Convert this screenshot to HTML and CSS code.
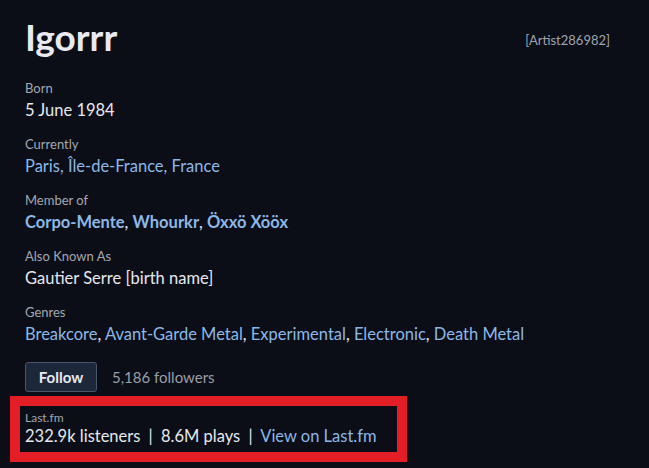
FILE: index.html
```html
<!DOCTYPE html>
<html lang="en">
<head>
<meta charset="utf-8">
<title>Igorrr</title>
<link rel="stylesheet" href="styles.css">
</head>
<body>
<main class="artist">
  <header class="artist-head">
    <h1 class="artist-name">Igorrr</h1>
    <span class="artist-id">[Artist286982]</span>
  </header>

  <dl class="facts">
    <div class="fact">
      <dt class="fact-label">Born</dt>
      <dd class="fact-value">5 June 1984</dd>
    </div>
    <div class="fact">
      <dt class="fact-label">Currently</dt>
      <dd class="fact-value"><a class="link" href="#">Paris, Île-de-France, France</a></dd>
    </div>
    <div class="fact">
      <dt class="fact-label">Member of</dt>
      <dd class="fact-value"><a class="link strong" href="#">Corpo-Mente</a>, <a class="link strong" href="#">Whourkr</a>, <a class="link strong" href="#">Öxxö Xööx</a></dd>
    </div>
    <div class="fact">
      <dt class="fact-label">Also Known As</dt>
      <dd class="fact-value">Gautier Serre [birth name]</dd>
    </div>
    <div class="fact">
      <dt class="fact-label">Genres</dt>
      <dd class="fact-value"><a class="link" href="#">Breakcore</a>, <a class="link" href="#">Avant-Garde Metal</a>, <a class="link" href="#">Experimental</a>, <a class="link" href="#">Electronic</a>, <a class="link" href="#">Death Metal</a></dd>
    </div>
  </dl>

  <div class="follow-row">
    <button class="follow-btn" type="button">Follow</button>
    <span class="followers">5,186 followers</span>
  </div>

  <section class="lastfm">
    <div class="lastfm-label">Last.fm</div>
    <div class="lastfm-stats">232.9k listeners <span class="sep">|</span> 8.6M plays <span class="sep">|</span> <a class="link" href="#">View on Last.fm</a></div>
  </section>
</main>
</body>
</html>
```

FILE: styles.css
```css
html, body {
  margin: 0;
  padding: 0;
  background: #0b0e17;
}
body {
  font-family: Lato, "Noto Sans", sans-serif;
  color: #e6e8ee;
}
.artist {
  padding: 12px 39px 0 25px;
}
.artist-head {
  display: flex;
  justify-content: space-between;
  align-items: center;
  height: 50px;
}
.artist-name {
  margin: 0;
  font-size: 37px;
  font-weight: 700;
  color: #e8eaf0;
  line-height: 40px;
}
.artist-id {
  font-size: 13px;
  color: #a0a4ad;
  margin-top: 6px;
}
.facts {
  margin: 17px 0 0;
}
.fact {
  margin: 0 0 14px;
}
.fact-label {
  font-size: 13px;
  line-height: 18px;
  color: #a3a7b0;
}
.fact-value {
  margin: 2px 0 0;
  font-size: 16.5px;
  line-height: 22px;
  color: #e6e8ee;
}
.link {
  color: #8db8e6;
  text-decoration: none;
}
.strong {
  font-weight: 700;
}
.follow-row {
  display: flex;
  align-items: center;
  gap: 15px;
  margin-top: 17px;
}
.follow-btn {
  width: 72px;
  height: 30px;
  background: #1c273a;
  border: 1px solid #4a5568;
  border-radius: 3px;
  color: #e8eaf0;
  font-family: inherit;
  font-size: 15px;
  font-weight: 700;
  padding: 0;
}
.followers {
  font-size: 15px;
  color: #9a9ea7;
}
.lastfm {
  margin: 4px 0 0 -15px;
  width: 372px;
  border: 10px solid #e41e26;
  padding: 5px 0 5px 5px;
}
.lastfm-label {
  font-size: 12px;
  line-height: 14px;
  color: #a3a7b0;
}
.lastfm-stats {
  font-size: 16.5px;
  line-height: 22px;
  color: #e6e8ee;
}
.sep {
  margin: 0 4px;
}
```
